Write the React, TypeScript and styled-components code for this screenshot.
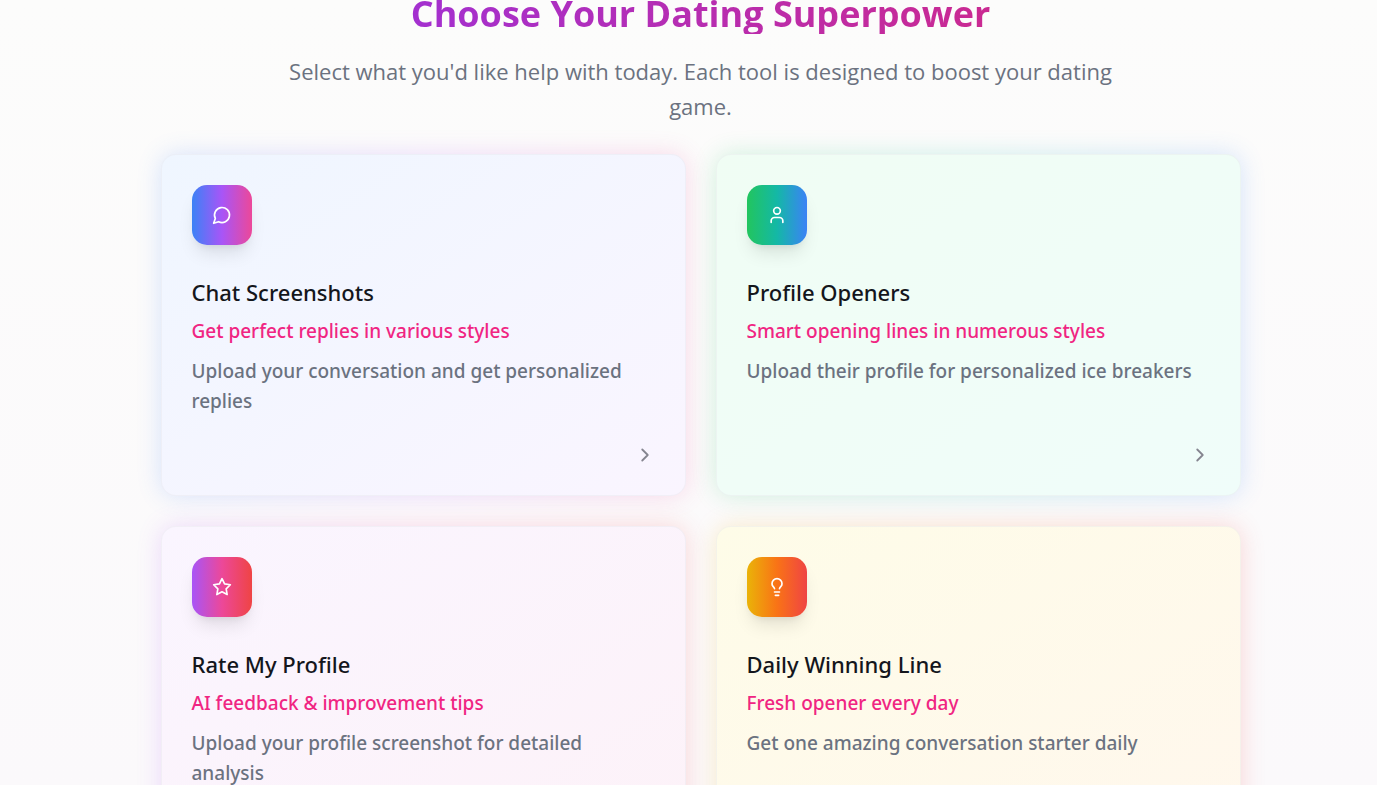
import React from "react";
import styled, { createGlobalStyle } from "styled-components";
import { ChevronRight, Lightbulb, User } from "lucide-react";

const GlobalStyle = createGlobalStyle`
  *, *::before, *::after { box-sizing: border-box; }
  body {
    margin: 0;
    background: linear-gradient(to bottom, #fcfcfb, #fbf9fb);
    font-family: "Segoe UI", "Noto Sans", "Open Sans", sans-serif;
    color: #14161c;
    overflow-x: hidden;
  }
  h1, h2, p { margin: 0; }
`;

const Viewport = styled.div`
  height: 100vh;
  overflow-x: hidden;
  overflow-y: auto;
  scrollbar-width: none;
`;

const Page = styled.main`
  margin-top: -11px;
  padding: 0 24px 30px 48px;
`;

const Content = styled.div`
  max-width: 1080px;
  margin: 0 auto;
`;

const Header = styled.header`
  display: flex;
  flex-direction: column;
  gap: 20px;
  align-items: center;
  margin-bottom: 30px;
  text-align: center;
`;

const Heading = styled.h1`
  width: 100%;
  padding-top: 4px;
  font-family: "Segoe UI", "Open Sans", sans-serif;
  font-size: 36px;
  line-height: 41px;
  font-weight: 700;
  color: transparent;
  background: linear-gradient(to right, #9333ea, #db2777);
  background-clip: text;
  -webkit-background-clip: text;
`;

const Intro = styled.p`
  max-width: 840px;
  font-family: "Segoe UI", "Open Sans", sans-serif;
  font-size: 22px;
  line-height: 35px;
  color: #6b7280;
`;

const Grid = styled.div`
  display: grid;
  grid-template-columns: repeat(2, minmax(0, 1fr));
  gap: 30px;
`;

const Cell = styled.div`
  position: relative;
  isolation: isolate;
`;

const Glow = styled.div<{ $colors: string }>`
  position: absolute;
  inset: 0;
  z-index: -1;
  border-radius: 15px;
  background: linear-gradient(to right, ${(p) => p.$colors});
  filter: blur(12px);
  opacity: 0.2;
`;

const Card = styled.button<{ $surface: string }>`
  display: flex;
  flex-direction: column;
  align-items: flex-start;
  width: 100%;
  height: 100%;
  min-height: 342px;
  padding: 30px;
  border: 1px solid rgba(229, 231, 235, 0.4);
  border-radius: 15px;
  background: linear-gradient(to bottom right, ${(p) => p.$surface}) border-box;
  font: inherit;
  color: inherit;
  text-align: left;
  cursor: pointer;
`;

const IconTile = styled.span<{ $colors: string }>`
  display: flex;
  align-items: center;
  justify-content: center;
  width: 60px;
  height: 60px;
  margin-bottom: 30px;
  border-radius: 15px;
  background: linear-gradient(to right, ${(p) => p.$colors});
  box-shadow: 0 12px 18px -4px rgba(0, 0, 0, 0.1), 0 5px 8px -5px rgba(0, 0, 0, 0.1);
  color: #fff;
`;

const Title = styled.span`
  font-size: 22px;
  line-height: 35px;
  font-weight: 500;
`;

const Tagline = styled.span`
  margin: 6px 0 10px;
  font-size: 19px;
  line-height: 30px;
  font-weight: 500;
  color: #f02582;
`;

const Description = styled.span`
  font-size: 19px;
  line-height: 30px;
  font-weight: 500;
  color: #6b7280;
`;

const Arrow = styled.span`
  display: flex;
  align-items: center;
  justify-content: center;
  align-self: flex-end;
  width: 20px;
  height: 20px;
  margin-top: auto;
  color: #858590;

  svg {
    flex: none;
  }
`;

const strokeProps = {
  width: 20,
  height: 20,
  viewBox: "0 0 24 24",
  fill: "none",
  stroke: "currentColor",
  strokeWidth: 2,
  strokeLinecap: "round" as const,
  strokeLinejoin: "round" as const,
  "aria-hidden": true,
};

const ChatIcon = () => (
  <svg {...strokeProps}>
    <path d="M7.9 20A9 9 0 1 0 4 16.1L2 22Z" />
  </svg>
);

const StarIcon = () => (
  <svg {...strokeProps}>
    <polygon points="12 2 15.09 8.26 22 9.27 17 14.14 18.18 21.02 12 17.77 5.82 21.02 7 14.14 2 9.27 8.91 8.26 12 2" />
  </svg>
);

interface Tool {
  title: string;
  tagline: string;
  description: string;
  colors: string;
  surface: string;
  icon: React.ReactNode;
}

const tools: Tool[] = [
  {
    title: "Chat Screenshots",
    tagline: "Get perfect replies in various styles",
    description: "Upload your conversation and get personalized replies",
    colors: "#3b82f6, #a855f7, #ec4899",
    surface: "#eff6ff, #faf5ff",
    icon: <ChatIcon />,
  },
  {
    title: "Profile Openers",
    tagline: "Smart opening lines in numerous styles",
    description: "Upload their profile for personalized ice breakers",
    colors: "#22c55e, #14b8a6, #3b82f6",
    surface: "#f0fdf4, #f0fdfa",
    icon: <User size={20} />,
  },
  {
    title: "Rate My Profile",
    tagline: "AI feedback & improvement tips",
    description: "Upload your profile screenshot for detailed analysis",
    colors: "#a855f7, #ec4899, #ef4444",
    surface: "#faf5ff, #fdf2f8",
    icon: <StarIcon />,
  },
  {
    title: "Daily Winning Line",
    tagline: "Fresh opener every day",
    description: "Get one amazing conversation starter daily",
    colors: "#eab308, #f97316, #ef4444",
    surface: "#fefce8, #fff7ed",
    icon: <Lightbulb size={20} />,
  },
];

export default function App() {
  return (
    <Viewport>
      <GlobalStyle />
      <Page>
        <Content>
          <Header>
            <Heading>Choose Your Dating Superpower</Heading>
            <Intro>
              Select what you'd like help with today. Each tool is designed to boost your dating game.
            </Intro>
          </Header>
          <Grid>
            {tools.map((tool) => (
              <Cell key={tool.title}>
                <Glow $colors={tool.colors} />
                <Card type="button" $surface={tool.surface}>
                  <IconTile $colors={tool.colors}>{tool.icon}</IconTile>
                  <Title>{tool.title}</Title>
                  <Tagline>{tool.tagline}</Tagline>
                  <Description>{tool.description}</Description>
                  <Arrow>
                    <ChevronRight size={22} />
                  </Arrow>
                </Card>
              </Cell>
            ))}
          </Grid>
        </Content>
      </Page>
    </Viewport>
  );
}
